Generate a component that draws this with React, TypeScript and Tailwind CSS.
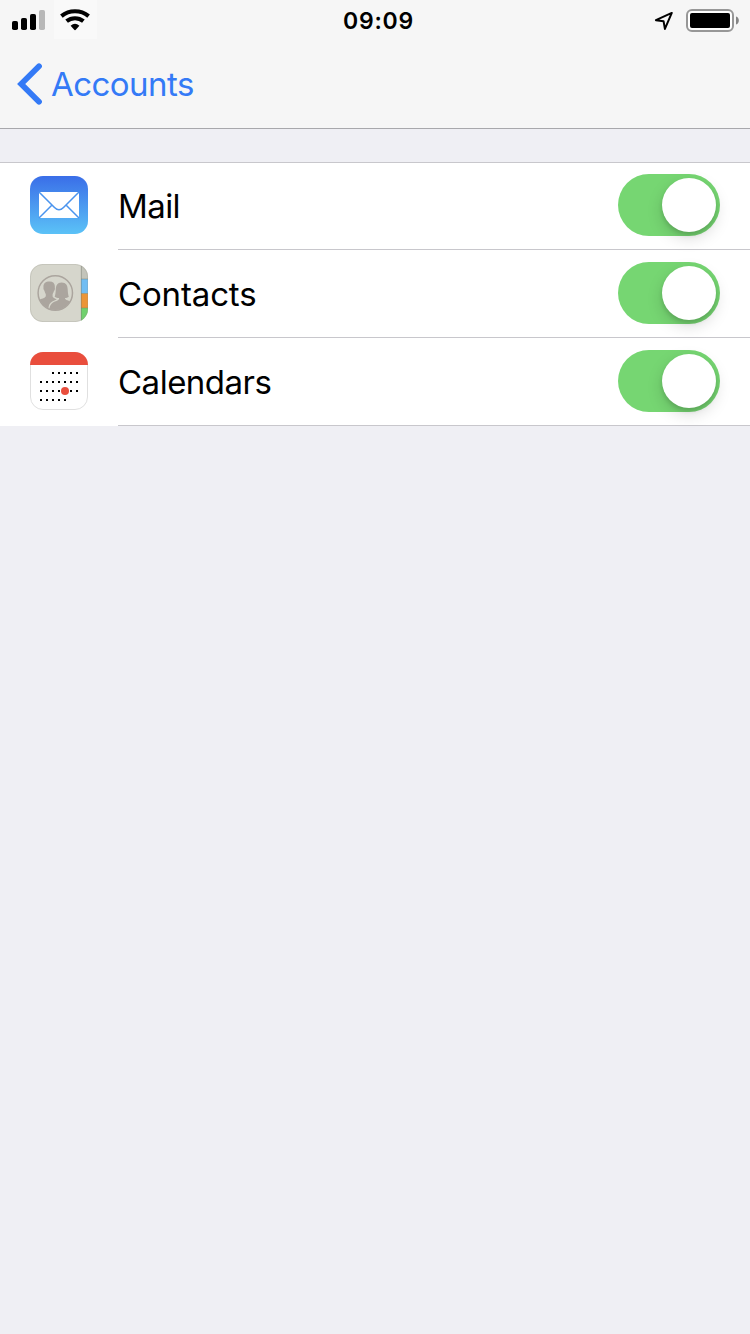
import { useState, type ReactNode } from "react";

function SignalIcon() {
  return (
    <svg width="34" height="20" viewBox="0 0 34 20" className="shrink-0">
      <rect x="0" y="11" width="6" height="9" rx="1.8" fill="#000" />
      <rect x="9" y="8" width="6" height="12" rx="1.8" fill="#000" />
      <rect x="18" y="4" width="6" height="16" rx="1.8" fill="#000" />
      <rect x="27" y="0" width="6" height="20" rx="1.8" fill="#b8b8b8" />
    </svg>
  );
}

function WifiIcon() {
  return (
    <svg width="30" height="22" viewBox="0 0 30 22" className="shrink-0">
      <g fill="none" stroke="#000" strokeWidth="4.1">
        <path d="M1.4 7.1 A21.5 21.5 0 0 1 28.6 7.1" />
        <path d="M6.6 12.2 A13.2 13.2 0 0 1 23.4 12.2" />
      </g>
      <path d="M10.6 16.8 Q15 12.8 19.4 16.8 L16 20.6 Q15 21.7 14 20.6 Z" fill="#000" />
    </svg>
  );
}

function LocationIcon() {
  return (
    <svg width="20" height="20" viewBox="0 0 20 20" className="shrink-0">
      <path
        d="M17.8 1.9 L1.9 9.2 L9.6 10.3 L10.9 17.9 Z"
        fill="none"
        stroke="#000"
        strokeWidth="2"
        strokeLinejoin="round"
      />
    </svg>
  );
}

function BatteryIcon() {
  return (
    <svg width="54" height="24" viewBox="0 0 54 24" className="shrink-0">
      <rect x="1" y="1" width="46" height="21" rx="5" fill="#fff" stroke="#979797" strokeWidth="2" />
      <rect x="4" y="4" width="40" height="15" rx="2" fill="#000" />
      <path d="M50 7.5 C53.8 8.5 53.8 14.5 50 15.5 Z" fill="#858585" />
    </svg>
  );
}

function MailIcon() {
  return (
    <svg width="58" height="58" viewBox="0 0 58 58" className="shrink-0">
      <defs>
        <linearGradient id="mail-sky" x1="0" y1="0" x2="0" y2="1">
          <stop offset="0" stopColor="#3a6ee8" />
          <stop offset="1" stopColor="#5bc2f7" />
        </linearGradient>
      </defs>
      <rect width="58" height="58" rx="13" fill="url(#mail-sky)" />
      <rect x="9" y="16" width="40" height="26" fill="#fff" />
      <g fill="none" stroke="#4a94ee" strokeWidth="1.5">
        <path d="M9 16 L24.5 31.5 Q29 36 33.5 31.5 L49 16" />
        <path d="M9 42 L21.8 29.2" />
        <path d="M49 42 L36.2 29.2" />
      </g>
    </svg>
  );
}

function ContactsIcon() {
  return (
    <svg width="58" height="58" viewBox="0 0 58 58" className="shrink-0">
      <defs>
        <clipPath id="contacts-tile">
          <rect width="58" height="58" rx="13" />
        </clipPath>
        <clipPath id="contacts-disc">
          <circle cx="25.3" cy="29" r="17" />
        </clipPath>
      </defs>
      <g clipPath="url(#contacts-tile)">
        <rect width="58" height="58" fill="#d6d6cc" />
        <rect x="51" y="0" width="7" height="15" fill="#c3c4ba" />
        <rect x="51" y="15" width="7" height="14.5" fill="#71bdf3" />
        <rect x="51" y="29.5" width="7" height="14.5" fill="#eb9538" />
        <rect x="51" y="44" width="7" height="14" fill="#70d16d" />
        <path d="M51 15 H58 M51 29.5 H58 M51 44 H58" stroke="#6f7c68" strokeOpacity="0.5" strokeWidth="0.8" />
        <path d="M51.3 0 V58" stroke="#75786c" strokeOpacity="0.55" strokeWidth="0.9" />
        <g clipPath="url(#contacts-disc)" fill="#aba59e">
          <path d="M19.3 17.4 C23.2 17.2 25.3 19.6 24.8 23.4 C25.2 24.8 24.7 26.3 24 27 C23.5 28.6 22.8 29.5 22.6 30.4 L22.6 32.4 C23 34 25.8 34.3 26.8 35.6 C22.8 37 19.6 38.8 18.8 42 L17.8 47 H5 V37.4 C8 35.7 15 34.4 15.8 32.2 L15.8 30.2 C15.2 29.2 14.7 28 14.4 26.8 C13.6 26 13.2 24.7 13.5 23.5 C13 19.7 15.4 17.4 19.3 17.4 Z" />
          <path d="M31.6 18.4 C36.2 18.4 37.6 21.4 37.7 25.4 C37.8 28.6 38.3 31.4 38.8 32.8 C37.8 33.8 36.3 34 34.9 34 C34.9 36.2 39 36.6 42.5 38.4 V48 H19.2 C19.2 41.7 21.3 39.3 25 37.6 C27.3 36.6 29.2 36 29.1 34 C27.6 34 25.8 33.8 24.7 32.8 C25.3 31 25.7 28.4 25.8 25.5 C25.9 21.4 27.3 18.4 31.6 18.4 Z" />
        </g>
        <circle cx="25.3" cy="29" r="17.2" fill="none" stroke="#aba59e" strokeWidth="1.5" />
      </g>
      <rect x="0.4" y="0.4" width="57.2" height="57.2" rx="12.6" fill="none" stroke="#8d9084" strokeOpacity="0.3" strokeWidth="0.8" />
    </svg>
  );
}

const calendarDots: [number, number[]][] = [
  [21, [23, 29, 35, 41, 47]],
  [30, [11, 17, 23, 29, 35, 41, 47]],
  [39, [11, 17, 23, 29, 41, 47]],
  [48, [11, 17, 23, 29, 35]],
];

function CalendarIcon() {
  return (
    <svg width="58" height="58" viewBox="0 0 58 58" className="shrink-0">
      <defs>
        <clipPath id="calendar-tile">
          <rect width="58" height="58" rx="13" />
        </clipPath>
      </defs>
      <rect x="0.5" y="0.5" width="57" height="57" rx="12.5" fill="#fff" stroke="#e0e0e0" />
      <rect width="58" height="13" fill="#e94e3d" clipPath="url(#calendar-tile)" />
      {calendarDots.map(([y, xs]) =>
        xs.map((x) => <rect key={`${x}-${y}`} x={x - 1} y={y - 1} width="2" height="2" fill="#000" />),
      )}
      <circle cx="35" cy="39" r="4" fill="#e94e3d" />
    </svg>
  );
}

function Toggle({ label }: { label: string }) {
  const [on, setOn] = useState(true);
  return (
    <button
      type="button"
      role="switch"
      aria-checked={on}
      aria-label={label}
      onClick={() => setOn(!on)}
      className={`flex h-[62px] w-[102px] shrink-0 items-center rounded-full p-1 ${
        on ? "justify-end bg-[#76d672]" : "justify-start bg-[#e5e5ea]"
      }`}
    >
      <span className="size-[54px] rounded-full bg-white shadow-[0_6px_16px_rgba(0,0,0,0.15),0_3px_4px_rgba(0,0,0,0.12)]" />
    </button>
  );
}

function Row({ icon, label, spacing }: { icon: ReactNode; label: string; spacing: string }) {
  return (
    <li className="flex h-[88px] pl-[30px]">
      <div className="flex w-[88px] items-start pt-[14px]">{icon}</div>
      <div className="flex flex-1 items-start justify-between border-b border-[#c8c7cc] pt-3 pr-[30px]">
        <span className={`pt-[11px] text-[33px] leading-[42px] ${spacing}`}>{label}</span>
        <Toggle label={label} />
      </div>
    </li>
  );
}

export default function App() {
  return (
    <div className="flex h-[1334px] w-[750px] flex-col bg-[#efeff4] font-['Inter',sans-serif] text-black">
      <header className="flex h-[129px] flex-col border-b border-[#a8a8ac] bg-[#f6f6f6]">
        <div className="grid h-10 grid-cols-3 items-start">
          <div className="flex">
            <div className="pt-[10px] pl-3">
              <SignalIcon />
            </div>
            <div className="ml-2 flex h-[39px] w-[43px] bg-[#f9f9f9] pt-[9px] pl-[6px]">
              <WifiIcon />
            </div>
          </div>
          <time className="pt-[7px] pl-[7px] text-center text-[23px] leading-7 font-semibold tracking-[0.75px]">
            09:09
          </time>
          <div className="flex justify-end pr-[10px]">
            <div className="mr-3 pt-[11px]">
              <LocationIcon />
            </div>
            <div className="pt-[9px]">
              <BatteryIcon />
            </div>
          </div>
        </div>
        <nav className="flex">
          <a href="#accounts" className="flex items-start pl-[17px] text-[#347af6]">
            <svg width="26" height="44" viewBox="0 0 26 44" className="mt-[22px] shrink-0">
              <path
                d="M22 4.3 L4.2 22 L22 39.7"
                fill="none"
                stroke="currentColor"
                strokeWidth="5.8"
                strokeLinecap="round"
              />
            </svg>
            <span className="ml-2 pt-[23px] text-[33px] leading-[42px] tracking-[-0.55px]">Accounts</span>
          </a>
        </nav>
      </header>
      <main className="pt-[33px]">
        <ul className="bg-white shadow-[inset_0_1px_0_#c8c7cc]">
          <Row icon={<MailIcon />} label="Mail" spacing="tracking-[-0.6px]" />
          <Row icon={<ContactsIcon />} label="Contacts" spacing="tracking-[-0.15px]" />
          <Row icon={<CalendarIcon />} label="Calendars" spacing="tracking-[-0.5px]" />
        </ul>
      </main>
    </div>
  );
}
